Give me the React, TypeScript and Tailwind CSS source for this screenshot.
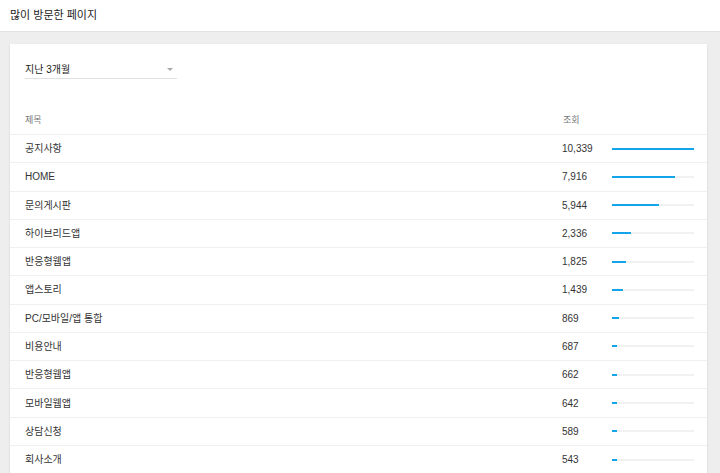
import React from "react";

const rows: [string, number][] = [
  ["공지사항", 10339],
  ["HOME", 7916],
  ["문의게시판", 5944],
  ["하이브리드앱", 2336],
  ["반응형웹앱", 1825],
  ["앱스토리", 1439],
  ["PC/모바일/앱 통합", 869],
  ["비용안내", 687],
  ["반응형웹앱", 662],
  ["모바일웹앱", 642],
  ["상담신청", 589],
  ["회사소개", 543],
];

const max = 10339;

export default function App() {
  return (
    <div
      className="w-[720px] h-[473px] bg-[#eeeeee] overflow-hidden text-[#333]"
      style={{ fontFamily: '"Liberation Sans", "Noto Sans CJK KR", sans-serif' }}
    >
      <div className="h-[32px] bg-white border-b border-[#e2e2e2] pl-[10px] flex items-center text-[11px] text-[#222]">
        많이 방문한 페이지
      </div>
      <div className="px-[10px] pt-[12px]">
        <div className="w-[697px] bg-white shadow-[0_1px_2px_rgba(0,0,0,0.12)]">
          <div className="px-[15px] pt-[18px]">
            <div className="w-[152px] h-[17px] border-b border-[#e0e0e0] flex items-center justify-between text-[10px] text-[#222]">
              <span className="-mt-[1px]">지난 3개월</span>
              <span className="mr-[4px] -mt-[1px] w-0 h-0 border-l-[3px] border-r-[3px] border-t-[3px] border-l-transparent border-r-transparent border-t-[#aaa]" />
            </div>
          </div>
          <div className="h-[28px] mt-[28px] border-b border-[#f0f0f0] flex items-center pl-[15px] text-[9px] text-[#777]">
            <div className="flex-1">제목</div>
            <div className="w-[50px] pl-[1px]">조회</div>
            <div className="w-[82px] mr-[13px]" />
          </div>
          {rows.map(([name, v], i) => (
            <div
              key={i}
              className="h-[28.27px] border-b border-[#f0f0f0] flex items-center pl-[15px] text-[10px]"
            >
              <div className="flex-1">{name}</div>
              <div className="w-[50px]">{v.toLocaleString("en-US")}</div>
              <div className="w-[82px] mr-[13px] h-[2px] bg-[#f1f1f1]">
                <div className="h-full bg-[#13a5ea]" style={{ width: `${Math.max(5, (v / max) * 82)}px` }} />
              </div>
            </div>
          ))}
        </div>
      </div>
    </div>
  );
}
